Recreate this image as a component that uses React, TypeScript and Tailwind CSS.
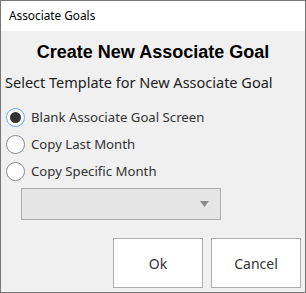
import React from 'react';

const options = ['Blank Associate Goal Screen', 'Copy Last Month', 'Copy Specific Month'];

const App = () => {
    const [selected, setSelected] = React.useState(0);

    return (
        <div className="w-[306px] h-[293px] flex flex-col border border-[#777777] bg-[#f0f0f0] overflow-hidden" style={{ fontFamily: '"Noto Sans", "Open Sans", sans-serif' }}>

            {/* title bar */}
            <div className="h-[30px] shrink-0 bg-white flex items-center pl-2 text-[11.8px] text-black">
                Associate Goals
            </div>

            {/* body */}
            <div className="flex-1 flex flex-col">
                <h1 className="text-center font-bold text-[18px] text-black mt-[10px] leading-[22px]" style={{ fontFamily: '"Liberation Sans", Arial, sans-serif' }}>
                    Create New Associate Goal
                </h1>

                <p className="mt-[9px] pl-1 text-[14.5px] leading-5 text-[#222222]">
                    Select Template for New Associate Goal
                </p>

                <div className="mt-[16px] flex flex-col gap-[9px] pl-[5px]">
                    {options.map((label, i) => (
                        <button key={label} onClick={() => setSelected(i)} className="flex items-center gap-[6px] h-[18px] text-left">
                            <span className={`w-[19px] h-[19px] rounded-full border bg-white flex items-center justify-center ${selected === i ? 'border-[#6aa8f7]' : 'border-[#8a8a8a]'}`}>
                                {selected === i && <span className="w-[11px] h-[11px] rounded-full bg-[#333333]" />}
                            </span>
                            <span className="text-[13.2px] text-[#333333] leading-5">{label}</span>
                        </button>
                    ))}
                </div>

                <div className="mt-[8px] ml-[20px] w-[200px] h-[32px] border border-[#adadad] bg-[#e5e5e5] flex items-center justify-end pr-[11px]">
                    <svg width="9" height="6" viewBox="0 0 9 6">
                        <path d="M0 0 L9 0 L4.5 6 Z" fill="#8a8a8a" />
                    </svg>
                </div>

                <div className="mt-[18px] flex justify-end gap-[8px] pr-[4px]">
                    <button className="w-[90px] h-[50px] border border-[#adadad] bg-white text-[14px] text-[#333333]">
                        Ok
                    </button>
                    <button className="w-[90px] h-[50px] border border-[#adadad] bg-white text-[14px] text-[#333333]">
                        Cancel
                    </button>
                </div>
            </div>
        </div>
    )
}

export default App;
